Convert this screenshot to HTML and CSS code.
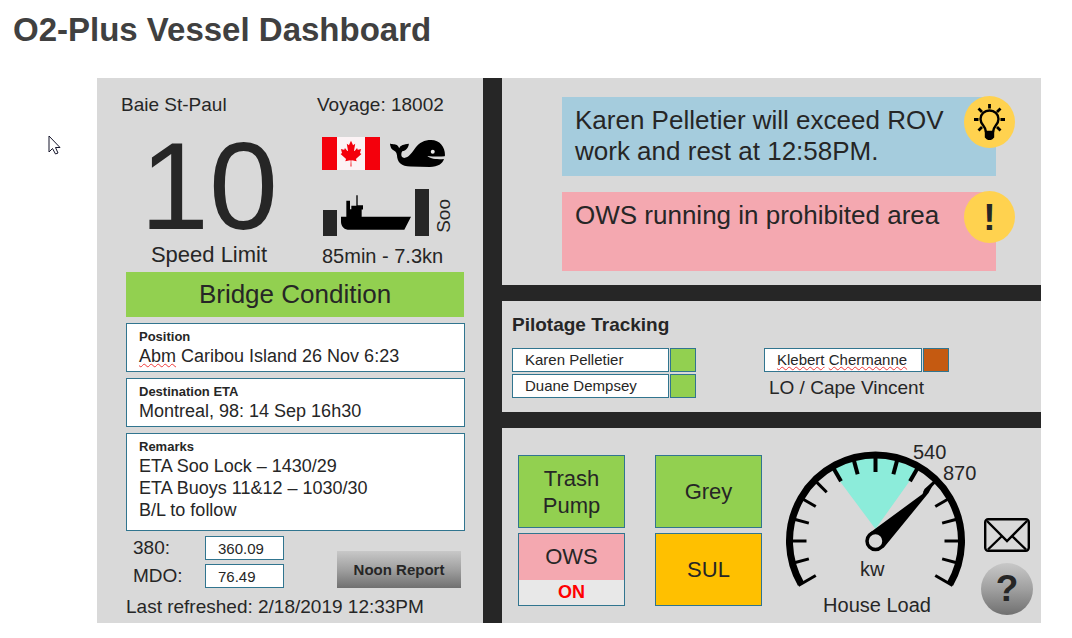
FILE: index.html
```html
<!DOCTYPE html>
<html lang="en">
<head>
<meta charset="utf-8">
<title>O2-Plus Vessel Dashboard</title>
<link rel="stylesheet" href="styles.css">
</head>
<body>
<h1 class="title">O2-Plus Vessel Dashboard</h1>

<svg class="pointer" viewBox="0 0 13 20" aria-hidden="true">
  <path d="M1 1V17L4.500 13.500L7.500 19L10 18L7.500 12.500H12Z" fill="#fff" stroke="#15152b" stroke-width="1"/>
</svg>

<main class="dashboard">
  <section class="panel vessel">
    <div class="summary">
      <div class="heading">Baie St-Paul</div>
      <div class="heading">Voyage: 18002</div>
      <div class="speed">
        <div class="speed-value">10</div>
        <div class="speed-label">Speed Limit</div>
      </div>
      <div class="transit">
        <div class="zone-icons">
          <svg class="flag" viewBox="0 0 58 33" role="img" aria-label="Canada">
            <rect width="58" height="33" fill="#f4000c"/>
            <rect x="15" width="28" height="33" fill="#fcf3f5"/>
            <path transform="translate(29 16.500) scale(.0056 .0064)" fill="#f4000c" d="m-90 2030 45-863a95 95 0 0 0-111-98l-859 151 116-320a65 65 0 0 0-20-73l-941-762 212-99a65 65 0 0 0 34-79l-186-572 542 115a65 65 0 0 0 73-38l105-247 423 454a65 65 0 0 0 111-57l-204-1052 327 189a65 65 0 0 0 91-27l332-652 332 652a65 65 0 0 0 91 27l327-189-204 1052a65 65 0 0 0 111 57l423-454 105 247a65 65 0 0 0 73 38l542-115-186 572a65 65 0 0 0 34 79l212 99-941 762a65 65 0 0 0-20 73l116 320-859-151a95 95 0 0 0-111 98l45 863z"/>
          </svg>
          <svg class="whale" viewBox="0 0 166 81" role="img" aria-label="Whale zone">
            <path d="M0 10C8 14 18 10 24 18L28 25C31 15 42 13 57 11C56 23 48 32 37 34C33 40 32 53 43 54C56 54 66 38 78 22C88 8 104 0 124 0C150 0 166 20 166 46L165 49C145 51 125 49 113 48C120 55 134 59 163 57C158 72 146 80 120 81L62 80C34 80 22 68 21 46C20 36 14 33 6 28C2 22 0 15 0 10Z"/>
            <circle cx="129" cy="35" r="6" fill="#eee"/>
          </svg>
        </div>
        <div class="lock">
          <span class="gate gate-low"></span>
          <svg class="ship" viewBox="0 0 210 104" role="img" aria-label="Ship in lock">
            <path d="M0 65H16V17H27V42H31V32H46V0H50V30H66V43H62V65H210L190 104H20C6 102 0 90 0 80Z"/>
          </svg>
          <span class="gate gate-high"></span>
          <span class="lock-name">Soo</span>
        </div>
        <div class="transit-text">85min - 7.3kn</div>
      </div>
    </div>

    <div class="condition">Bridge Condition</div>

    <div class="notes">
      <div class="note">
        <h2 class="note-title">Position</h2>
        <p class="note-text"><span class="typo">Abm</span> Caribou Island 26 Nov 6:23</p>
      </div>
      <div class="note">
        <h2 class="note-title">Destination ETA</h2>
        <p class="note-text">Montreal, 98: 14 Sep 16h30</p>
      </div>
      <div class="note note-long">
        <h2 class="note-title">Remarks</h2>
        <p class="note-text">ETA Soo Lock – 1430/29<br>ETA Buoys 11&amp;12 – 1030/30<br>B/L to follow</p>
      </div>
    </div>

    <div class="report">
      <div class="fuel">
        <label for="fuel-380">380:</label>
        <input class="fuel-input" id="fuel-380" type="text" value="360.09">
        <label for="fuel-mdo">MDO:</label>
        <input class="fuel-input" id="fuel-mdo" type="text" value="76.49">
      </div>
      <button class="noon" type="button">Noon Report</button>
    </div>
    <div class="refreshed">Last refreshed: 2/18/2019 12:33PM</div>
  </section>

  <div class="side">
    <section class="panel alerts">
      <div class="alert alert-info">
        Karen Pelletier will exceed ROV work and rest at 12:58PM.
        <span class="badge">
          <svg class="bulb" viewBox="0 0 31 36" fill="none" stroke="#000" stroke-width="2.400" stroke-linecap="round" aria-hidden="true">
            <path d="M12 28C12 22 6.500 21 6.500 15A9 8.500 0 0 1 24.500 15C24.500 21 19 22 19 28"/>
            <path d="M12 28H19V33Q15.500 37 12 33Z" fill="#000"/>
            <path stroke-width="2.800" stroke-linecap="butt" d="M15.500 0V4.500M4.500 4.500L8 8M26.500 4.500L23 8M0 15.500H4.500M26.500 15.500H31M4.500 26.500L8 23M26.500 26.500L23 23"/>
          </svg>
        </span>
      </div>
      <div class="alert alert-danger">
        OWS running in prohibited area
        <span class="badge">!</span>
      </div>
    </section>

    <section class="panel pilotage">
      <h2 class="pilotage-title">Pilotage Tracking</h2>
      <div class="pilots">
        <div class="pilot"><span class="pilot-name">Karen Pelletier</span><span class="status status-ok"></span></div>
        <div class="pilot"><span class="pilot-name"><span class="typo">Klebert</span> <span class="typo">Chermanne</span></span><span class="status status-late"></span></div>
        <div class="pilot"><span class="pilot-name">Duane Dempsey</span><span class="status status-ok"></span></div>
        <div class="pilot-place">LO / Cape Vincent</div>
      </div>
    </section>

    <section class="panel systems">
      <div class="tiles">
        <button class="tile tile-ok" type="button">Trash<br>Pump</button>
        <button class="tile tile-ok" type="button">Grey</button>
        <button class="tile tile-split" type="button"><span class="tile-name">OWS</span><span class="tile-state">ON</span></button>
        <button class="tile tile-warn" type="button">SUL</button>
      </div>

      <figure class="gauge">
        <svg class="dial" viewBox="0 0 200 152" role="img" aria-label="House load gauge">
          <g transform="translate(95.500 102)">
            <path d="M0 -12L-44 -71A83 83 0 0 1 42 -71Z" fill="#8cecda"/>
            <path d="M-74.500 43A86 86 0 1 1 74.500 43" fill="none" stroke="#000" stroke-width="7"/>
            <g stroke="#000" stroke-width="3">
              <path d="M0 -69V-84" stroke-width="4"/>
              <path d="M0 -69V-84" transform="rotate(-15)" stroke-width="4"/>
              <path d="M0 -69V-84" transform="rotate(15)" stroke-width="4"/>
              <path d="M0 -69V-84" transform="rotate(-30)" stroke-width="4"/>
              <path d="M0 -69V-84" transform="rotate(30)" stroke-width="4"/>
              <path d="M0 -69V-84" transform="rotate(-45)"/>
              <path d="M0 -69V-84" transform="rotate(45)"/>
              <path d="M0 -69V-84" transform="rotate(-60)"/>
              <path d="M0 -69V-84" transform="rotate(60)"/>
              <path d="M0 -69V-84" transform="rotate(-75)"/>
              <path d="M0 -69V-84" transform="rotate(75)"/>
              <path d="M0 -69V-84" transform="rotate(-90)"/>
              <path d="M0 -69V-84" transform="rotate(90)"/>
              <path d="M0 -69V-84" transform="rotate(-105)"/>
              <path d="M0 -69V-84" transform="rotate(105)"/>
              <path d="M0 -69V-89" transform="rotate(-120)"/>
              <path d="M0 -69V-89" transform="rotate(120)"/>
            </g>
            <path d="M-6 -8L47 -47L49 -52L58 -60L59 -59L53 -48L8 7Z"/>
            <circle r="8.500" fill="#d9d9d9" stroke="#000" stroke-width="3.500"/>
          </g>
          <text class="dial-text" x="133" y="20">540</text>
          <text class="dial-text" x="163" y="41">870</text>
          <text class="dial-text" x="80" y="137">kw</text>
        </svg>
        <figcaption class="gauge-label">House Load</figcaption>
      </figure>

      <div class="actions">
        <button class="mail" type="button" aria-label="Messages">
          <svg class="mail-icon" viewBox="0 0 46 34" fill="none" stroke="#000" stroke-width="2.400" aria-hidden="true">
            <rect x="1.200" y="1.200" width="43.600" height="31.600" rx="3"/>
            <path d="M3 3L23 23L43 3M18 18L4 31.500M28 18L42 31.500"/>
          </svg>
        </button>
        <button class="help" type="button">?</button>
      </div>
    </section>
  </div>
</main>
</body>
</html>
```

FILE: styles.css
```css
* { box-sizing: border-box; }

body {
  margin: 0;
  background: #fff;
  color: #262626;
  font-family: "Liberation Sans", Arial, sans-serif;
  font-size: 19px;
  line-height: 22px;
}

h1, h2, p, figure { margin: 0; }

button {
  padding: 0;
  border: 0;
  background: none;
  color: inherit;
  font: inherit;
}

svg { display: block; }

.title {
  padding: 10px 13px 28px;
  color: #404040;
  font-size: 33px;
  line-height: 40px;
}

.pointer {
  position: absolute;
  left: 48px;
  top: 135px;
  width: 13px;
  height: 20px;
}

.dashboard {
  display: grid;
  grid-template-columns: minmax(386px, 386fr) minmax(539px, 539fr);
  gap: 19px;
  margin: 0 31px 14px 97px;
  background: #262626;
}

.panel { background: #d9d9d9; }

/* Vessel panel */
.summary {
  display: grid;
  grid-template-columns: 176px 1fr;
  column-gap: 20px;
  padding: 16px 24px 4px;
}

.speed {
  padding-top: 20px;
  text-align: center;
}

.speed-value {
  font-size: 124px;
  line-height: 100px;
}

.speed-label {
  margin-top: 6px;
  font-size: 22px;
  line-height: 26px;
}

.transit { padding: 21px 0 0 5px; }

.zone-icons {
  display: flex;
  align-items: center;
  gap: 10px;
}

.flag { width: 58px; height: 33px; }
.whale { width: 55px; height: 27px; }

.lock {
  display: flex;
  align-items: flex-end;
  gap: 4px;
  height: 47px;
  margin-top: 19px;
  padding-left: 1px;
}

.gate { width: 14px; background: #262626; }
.gate-low { height: 26px; }
.gate-high { height: 47px; }

.ship {
  width: 70px;
  height: 35px;
  margin-bottom: 6px;
}

.lock-name {
  writing-mode: vertical-rl;
  transform: rotate(180deg);
  padding-top: 3px;
}

.transit-text {
  margin-top: 8px;
  font-size: 20px;
  line-height: 24px;
}

.condition {
  margin: 0 19px 0 29px;
  background: #92d050;
  font-size: 26px;
  line-height: 45px;
  text-align: center;
}

.notes {
  display: grid;
  gap: 6px;
  margin: 6px 18px 0 29px;
}

.note {
  padding: 5px 12px 4px;
  border: 1px solid #31758f;
  background: #fff;
}

.note-long { padding-bottom: 9px; }

.note-title {
  font-size: 13px;
  line-height: 16px;
}

.note-text {
  font-size: 18px;
  line-height: 22px;
}

.typo { text-decoration: underline wavy #f03a3a 1px; }

.report {
  display: flex;
  align-items: flex-end;
  justify-content: space-between;
  margin: 5px 22px 0 36px;
}

.fuel {
  display: grid;
  grid-template-columns: 72px 79px;
  align-items: center;
  row-gap: 4px;
}

.fuel-input {
  width: 100%;
  height: 24px;
  padding: 0 12px;
  border: 1px solid #31758f;
  background: #fff;
  color: inherit;
  font: inherit;
  font-size: 15px;
}

.noon {
  width: 124px;
  height: 37px;
  background: linear-gradient(#c8c8c8, #a0a0a0 50%, #707070);
  font-size: 15px;
  font-weight: bold;
}

.refreshed { padding: 8px 18px 4px 29px; }

/* Right side */
.side {
  display: grid;
  grid-template-rows: auto auto 1fr;
  gap: 16px;
}

.alerts {
  display: grid;
  gap: 16px;
  padding: 19px 45px 14px 60px;
}

.alert {
  position: relative;
  min-height: 79px;
  padding: 8px 50px 8px 13px;
  font-size: 26px;
  line-height: 31px;
}

.alert-info { background: #a5ccdd; }
.alert-danger { background: #f4a8b0; }

.badge {
  position: absolute;
  top: -1px;
  right: -19px;
  display: grid;
  place-items: center;
  width: 51px;
  height: 52px;
  border-radius: 50%;
  background: #ffd24f;
  font-size: 37px;
  font-weight: bold;
}

.bulb { width: 31px; height: 36px; }

.pilotage { padding: 13px 10px 10px; }

.pilotage-title {
  font-size: 19px;
  line-height: 22px;
}

.pilots {
  display: grid;
  grid-template-columns: 184px 185px;
  grid-auto-rows: 24px;
  column-gap: 68px;
  row-gap: 2px;
  margin-top: 12px;
  padding-bottom: 4px;
}

.pilot {
  display: flex;
  gap: 1px;
  font-size: 15px;
}

.pilot-name {
  flex: 1;
  padding-left: 12px;
  border: 1px solid #31758f;
  background: #fff;
}

.status {
  width: 26px;
  border: 1px solid #31758f;
}

.status-ok { background: #92d050; }
.status-late { background: #c55a11; }

.pilot-place {
  padding-left: 5px;
  line-height: 28px;
}

.systems {
  display: flex;
  align-items: flex-start;
  padding: 11px 8px 4px 16px;
}

.tiles {
  display: grid;
  grid-template-columns: 107px 107px;
  grid-auto-rows: 73px;
  gap: 5px 30px;
  margin-top: 16px;
}

.tile {
  border: 1px solid #31758f;
  font-size: 22px;
  line-height: 27px;
}

.tile-ok { background: #92d050; }
.tile-warn { background: #ffc000; }

.tile-split {
  display: flex;
  flex-direction: column;
  background: #f4a8b0;
}

.tile-name {
  width: 100%;
  line-height: 46px;
}

.tile-state {
  width: 100%;
  background: #e8e8e8;
  color: #f00;
  font-size: 18px;
  font-weight: bold;
  line-height: 25px;
}

.gauge { margin-left: 18px; }

.dial { width: 200px; height: 152px; }

.dial-text {
  fill: #262626;
  font-size: 20px;
}

.gauge-label {
  padding-right: 6px;
  font-size: 20px;
  line-height: 28px;
  text-align: center;
}

.actions {
  display: grid;
  justify-items: center;
  gap: 11px;
  margin: 79px 0 0 auto;
}

.mail-icon { width: 46px; height: 34px; }

.help {
  width: 52px;
  height: 52px;
  border-radius: 50%;
  background: linear-gradient(#c8c8c8, #a0a0a0 50%, #707070);
  font-size: 37px;
  font-weight: bold;
}
```
